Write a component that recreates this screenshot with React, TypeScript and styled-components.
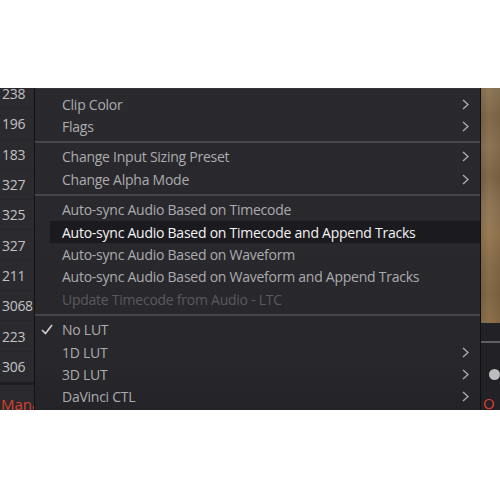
import React from "react";
import styled, { createGlobalStyle } from "styled-components";

const Global = createGlobalStyle`
  html, body { margin: 0; padding: 0; background: #ffffff; }
  body { font-family: "Open Sans", "Liberation Sans", sans-serif; }
`;

const Stage = styled.div`
  margin-top: 88px;
  height: 322px;
  display: flex;
  overflow: hidden;
`;

const NumberColumn = styled.div`
  width: 34px;
  flex: none;
  background: #2b2a2f;
  border-right: 1px solid #121114;
  display: flex;
  flex-direction: column;
  overflow: hidden;
`;

const NumberList = styled.div`
  margin-top: -9px;
  display: flex;
  flex-direction: column;
`;

const NumberRow = styled.div`
  height: 30.3px;
  flex: none;
  box-sizing: border-box;
  display: flex;
  align-items: center;
  padding-left: 2px;
  font-size: 14px;
  letter-spacing: -0.3px;
  color: #c2c2c4;
  border-bottom: 1px solid #27262a;
`;

const MarkerRow = styled.div`
  flex: none;
  height: 40px;
  padding-top: 9px;
  padding-left: 1px;
  box-sizing: border-box;
  background: #2a2a2e;
  border-top: 3px solid #1f1e22;
  font-size: 15px;
  color: #d8402f;
  white-space: nowrap;
`;

const Menu = styled.div`
  flex: 1;
  background: linear-gradient(180deg, #2a292e 0%, #28272c 85%, #242328 100%);
  border-top: 1px solid #38373c;
  padding-top: 4px;
  display: flex;
  flex-direction: column;
`;

const Row = styled.div<{ $active?: boolean; $disabled?: boolean }>`
  height: 22.4px;
  flex: none;
  display: flex;
  align-items: center;
  font-size: 14px;
  letter-spacing: -0.25px;
  white-space: nowrap;
  color: ${(p) => (p.$active ? "#f4f4f4" : p.$disabled ? "#5a595e" : "#acacae")};
  background: ${(p) =>
    p.$active ? "linear-gradient(to right, transparent 15px, #1b1a1e 15px)" : "transparent"};
`;

const CheckSlot = styled.div`
  width: 27px;
  flex: none;
  display: flex;
  justify-content: flex-end;
  padding-right: 9px;
  box-sizing: border-box;
`;

const Label = styled.span`
  flex: 1;
`;

const ArrowSlot = styled.div`
  width: 18px;
  flex: none;
  display: flex;
  align-items: center;
`;

const Separator = styled.div`
  height: 2px;
  margin: 3px 0;
  background: #47464b;
  flex: none;
`;

const RightStrip = styled.div`
  width: 19px;
  flex: none;
  border-left: 1px solid #0f0e10;
  display: flex;
  flex-direction: column;
`;

const Texture = styled.div`
  height: 235px;
  flex: none;
  background:
    linear-gradient(90deg, rgba(0,0,0,0.08), rgba(255,255,255,0.03) 40%, rgba(0,0,0,0.06)),
    linear-gradient(180deg, #8b7656 0%, #7e6747 12%, #8a7050 25%, #7c6443 38%, #8d7352 50%, #94774f 62%, #866a46 75%, #7f6540 88%, #8a6d47 100%);
`;

const DarkPanel = styled.div`
  flex: 1;
  background: #222125;
  display: flex;
  flex-direction: column;
`;

const PanelLine = styled.div`
  height: 2px;
  margin-top: 18px;
  background: #5f5e63;
`;

const Knob = styled.div`
  width: 11px;
  height: 11px;
  border-radius: 50%;
  background: #bdbdbf;
  margin: 26px 0 0 8px;
`;

const RedMark = styled.div`
  margin-top: 13px;
  padding-left: 2px;
  font-size: 15px;
  color: #d8402f;
`;

const Check = () => (
  <svg width="12" height="11" viewBox="0 0 12 11">
    <polyline points="1,6 4.5,9.5 11,1" fill="none" stroke="#d0d0d2" strokeWidth="1.6" />
  </svg>
);

const Chevron = () => (
  <svg width="7" height="11" viewBox="0 0 7 11">
    <polyline points="1,1 6,5.5 1,10" fill="none" stroke="#a9a9ac" strokeWidth="1.5" />
  </svg>
);

type Item = { label: string; sub?: boolean; active?: boolean; disabled?: boolean; checked?: boolean };

const groups: Item[][] = [
  [
    { label: "Clip Color", sub: true },
    { label: "Flags", sub: true },
  ],
  [
    { label: "Change Input Sizing Preset", sub: true },
    { label: "Change Alpha Mode", sub: true },
  ],
  [
    { label: "Auto-sync Audio Based on Timecode" },
    { label: "Auto-sync Audio Based on Timecode and Append Tracks", active: true },
    { label: "Auto-sync Audio Based on Waveform" },
    { label: "Auto-sync Audio Based on Waveform and Append Tracks" },
    { label: "Update Timecode from Audio - LTC", disabled: true },
  ],
  [
    { label: "No LUT", checked: true },
    { label: "1D LUT", sub: true },
    { label: "3D LUT", sub: true },
    { label: "DaVinci CTL", sub: true },
  ],
];

const numbers = ["238", "196", "183", "327", "325", "327", "211", "3068", "223", "306"];

export default function App() {
  return (
    <>
      <Global />
      <Stage>
        <NumberColumn>
          <NumberList>
            {numbers.map((n, i) => (
              <NumberRow key={i}>{n}</NumberRow>
            ))}
            <MarkerRow>Mana</MarkerRow>
          </NumberList>
        </NumberColumn>
        <Menu>
          {groups.map((g, gi) => (
            <React.Fragment key={gi}>
              {gi > 0 && <Separator />}
              {g.map((it) => (
                <Row key={it.label} $active={it.active} $disabled={it.disabled}>
                  <CheckSlot>{it.checked && <Check />}</CheckSlot>
                  <Label>{it.label}</Label>
                  <ArrowSlot>{it.sub && <Chevron />}</ArrowSlot>
                </Row>
              ))}
            </React.Fragment>
          ))}
        </Menu>
        <RightStrip>
          <Texture />
          <DarkPanel>
            <PanelLine />
            <Knob />
            <RedMark>O</RedMark>
          </DarkPanel>
        </RightStrip>
      </Stage>
    </>
  );
}
